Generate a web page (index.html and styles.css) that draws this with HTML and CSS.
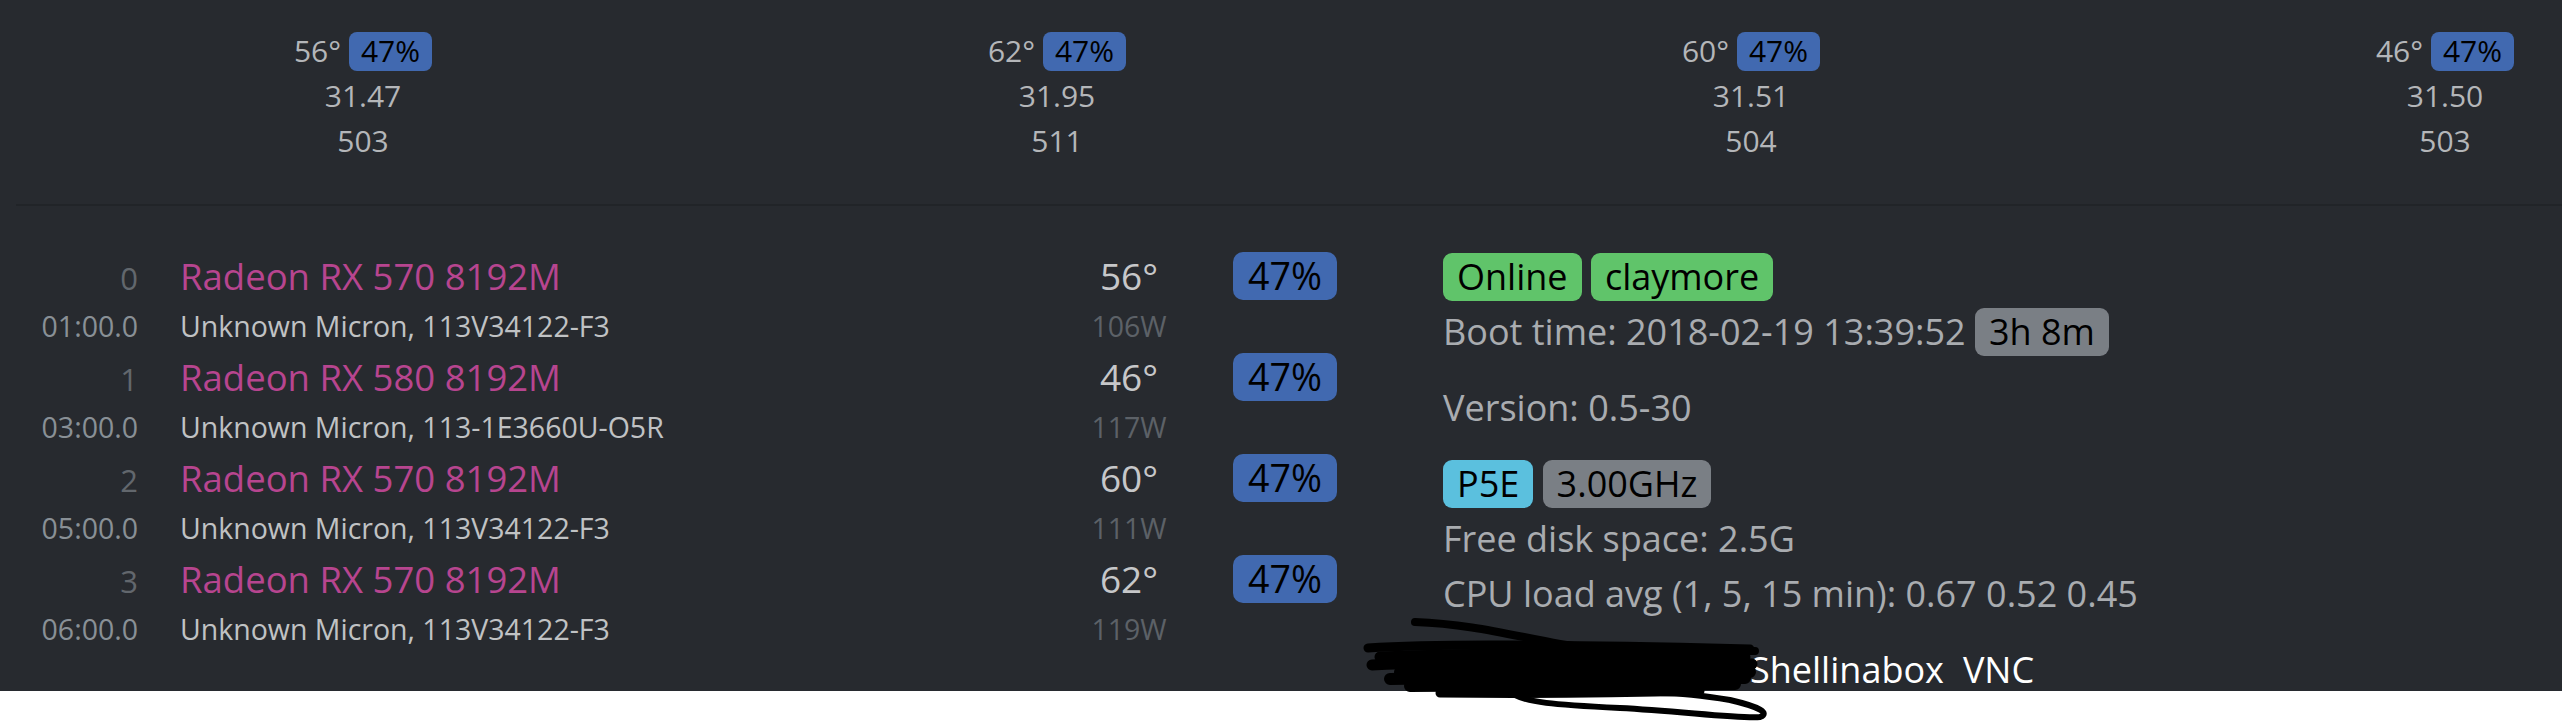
FILE: index.html
```html
<!DOCTYPE html>
<html lang="en">
<head>
<meta charset="utf-8">
<title>Rig status</title>
<link rel="stylesheet" href="styles.css">
</head>
<body>
<div class="panel">
  <div class="summary">
    <div class="sum-cell">
      <div>56° <span class="badge b-blue">47%</span></div>
      <div>31.47</div>
      <div>503</div>
    </div>
    <div class="sum-cell">
      <div>62° <span class="badge b-blue">47%</span></div>
      <div>31.95</div>
      <div>511</div>
    </div>
    <div class="sum-cell">
      <div>60° <span class="badge b-blue">47%</span></div>
      <div>31.51</div>
      <div>504</div>
    </div>
    <div class="sum-cell">
      <div>46° <span class="badge b-blue">47%</span></div>
      <div>31.50</div>
      <div>503</div>
    </div>
  </div>

  <div class="detail">
    <div class="gpus">
      <div class="g-idx">0</div>
      <div class="g-name">Radeon RX 570 8192M</div>
      <div class="g-temp">56°</div>
      <div class="g-load"><span class="badge b-blue lg">47%</span></div>
      <div class="g-bus">01:00.0</div>
      <div class="g-desc">Unknown Micron, 113V34122-F3</div>
      <div class="g-power">106W</div>
      <div class="g-empty"></div>

      <div class="g-idx">1</div>
      <div class="g-name">Radeon RX 580 8192M</div>
      <div class="g-temp">46°</div>
      <div class="g-load"><span class="badge b-blue lg">47%</span></div>
      <div class="g-bus">03:00.0</div>
      <div class="g-desc">Unknown Micron, 113-1E3660U-O5R</div>
      <div class="g-power">117W</div>
      <div class="g-empty"></div>

      <div class="g-idx">2</div>
      <div class="g-name">Radeon RX 570 8192M</div>
      <div class="g-temp">60°</div>
      <div class="g-load"><span class="badge b-blue lg">47%</span></div>
      <div class="g-bus">05:00.0</div>
      <div class="g-desc">Unknown Micron, 113V34122-F3</div>
      <div class="g-power">111W</div>
      <div class="g-empty"></div>

      <div class="g-idx">3</div>
      <div class="g-name">Radeon RX 570 8192M</div>
      <div class="g-temp">62°</div>
      <div class="g-load"><span class="badge b-blue lg">47%</span></div>
      <div class="g-bus">06:00.0</div>
      <div class="g-desc">Unknown Micron, 113V34122-F3</div>
      <div class="g-power">119W</div>
      <div class="g-empty"></div>
    </div>

    <div class="info">
      <div class="grp">
        <div class="line"><span class="badge b-green">Online</span> <span class="badge b-green">claymore</span></div>
        <div class="line">Boot time: 2018-02-19 13:39:52 <span class="badge b-grey">3h 8m</span></div>
      </div>
      <div class="grp">
        <div class="line">Version: 0.5-30</div>
      </div>
      <div class="grp">
        <div class="line"><span class="badge b-cyan">P5E</span> <span class="badge b-grey">3.00GHz</span></div>
        <div class="line">Free disk space: 2.5G</div>
        <div class="line">CPU load avg (1, 5, 15 min): 0.67 0.52 0.45</div>
      </div>
      <div class="grp grp-links">
        <div class="line links"><span class="redacted"></span><a class="lnk" href="#">Shellinabox</a><a class="lnk" href="#">VNC</a></div>
      </div>
    </div>
  </div>
</div>

<svg class="scribble" width="410" height="107" viewBox="0 0 410 107" aria-hidden="true">
  <g fill="none" stroke="#000" stroke-linecap="round" stroke-linejoin="round">
    <path stroke-width="8" d="M55 7 C 110 9, 150 20, 200 29 S 330 35, 395 36"/>
    <path stroke-width="9" d="M8 33 C 80 28, 200 30, 350 33 L 390 34"/>
    <path stroke-width="11" d="M20 42 C 120 38, 250 40, 385 42"/>
    <path stroke-width="11" d="M12 50 C 100 46, 250 47, 392 49"/>
    <path stroke-width="12" d="M40 57 C 130 54, 260 55, 390 57"/>
    <path stroke-width="12" d="M30 64 C 140 62, 270 62, 385 63"/>
    <path stroke-width="12" d="M50 71 C 150 70, 260 70, 375 69"/>
    <path stroke-width="9" d="M80 78 C 170 79, 260 78, 340 76"/>
    <path stroke-width="6" d="M150 76 C 160 88, 200 90, 260 93 C 320 96, 380 104, 400 102 C 410 98, 400 92, 370 85 C 340 80, 320 78, 300 78"/>
  </g>
  <path fill="#000" d="M40 36 C 150 32, 300 34, 380 38 L 384 66 C 300 74, 150 76, 60 74 Z"/>
</svg>
</body>
</html>
```

FILE: styles.css
```css
html, body {
  margin: 0;
  padding: 0;
}

body {
  background: #ffffff;
  font-family: "Open Sans", "Noto Sans", "Liberation Sans", sans-serif;
  overflow: hidden;
  position: relative;
  width: 2562px;
  height: 722px;
}

.panel {
  background: #272a2f;
  height: 691px;
  overflow: hidden;
}

/* ---------- summary strip ---------- */
.summary {
  display: flex;
  width: 2776px;
  margin-left: 16px;
  padding-top: 28px;
  padding-bottom: 41px;
  border-bottom: 2px solid #212428;
}

.sum-cell {
  flex: 0 0 694px;
  text-align: center;
  font-size: 30px;
  line-height: 45px;
  color: #b4b6b9;
}

/* ---------- badges ---------- */
.badge {
  display: inline-block;
  line-height: 1;
  color: #000;
  border-radius: 8px;
  padding: 4.5px 12px;
}

.badge.lg {
  font-size: 37.5px;
  padding: 5.25px 15px;
  border-radius: 10px;
}

.b-blue { background: #4169b0; }
.b-green { background: #60c46a; }
.b-cyan { background: #5bc0de; }
.b-grey { background: #7a7f85; }

/* ---------- detail area ---------- */
.detail {
  display: flex;
  padding-top: 43px;
}

.gpus {
  display: grid;
  grid-template-columns: 138px 941px 100px 158px;
  grid-template-rows: repeat(4, 53px 48px);
  align-items: baseline;
  flex: none;
}

.g-idx,
.g-name,
.g-temp,
.g-load {
  line-height: 53px;
}

.g-idx {
  text-align: right;
  font-size: 31px;
  color: #62676d;
}

.g-name {
  padding-left: 42px;
  font-size: 36.5px;
  color: #b7458f;
}

.g-temp {
  text-align: center;
  font-size: 37px;
  color: #c6c7c9;
}

.g-load {
  text-align: right;
  font-size: 37.5px;
}

.g-bus,
.g-desc,
.g-power {
  font-size: 28.5px;
  line-height: 48px;
}

.g-bus {
  text-align: right;
  color: #899096;
}

.g-desc {
  padding-left: 42px;
  color: #c0c2c4;
}

.g-power {
  text-align: center;
  color: #5c6167;
}

/* ---------- info column ---------- */
.info {
  margin-left: 106px;
  font-size: 36px;
  line-height: 55px;
  color: #a9acb0;
}

.grp + .grp {
  margin-top: 21px;
}

.grp + .grp-links {
  margin-top: 29px;
}

.info .badge {
  padding: 6px 14px;
  border-radius: 9px;
}

.links {
  display: flex;
  align-items: baseline;
  gap: 19px;
  line-height: 40px;
}

.redacted {
  display: inline-block;
  width: 288px;
}

.lnk {
  color: #ffffff;
  text-decoration: none;
}

/* redaction scribble drawn over the screenshot */
.scribble {
  position: absolute;
  left: 1360px;
  top: 615px;
}
```
